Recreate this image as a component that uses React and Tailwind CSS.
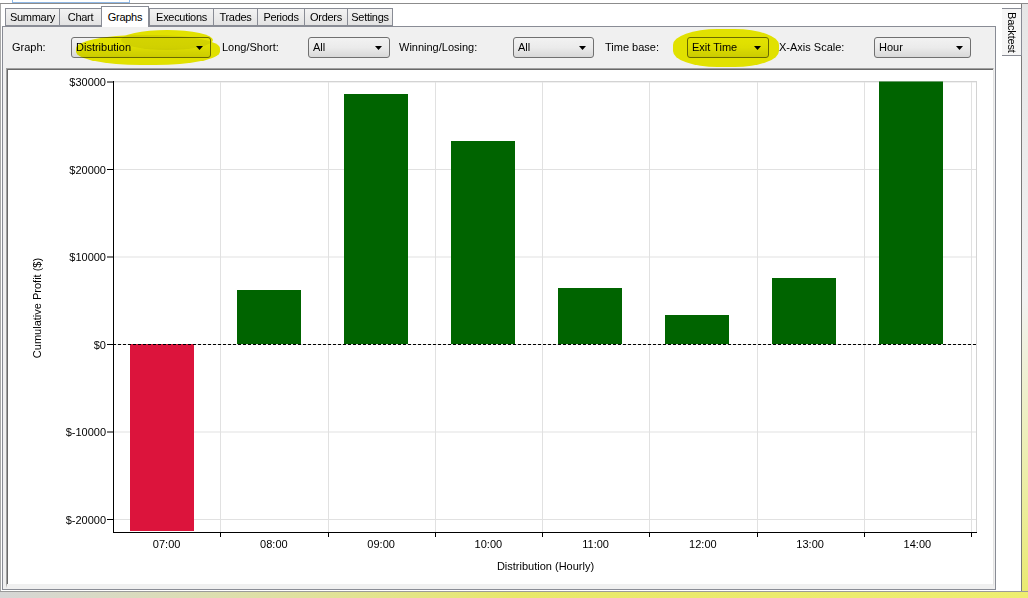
import React from 'react';

const tabs = [
    { label: 'Summary', w: 'w-[54px]' },
    { label: 'Chart', w: 'w-[42px]' },
    { label: 'Graphs', w: 'w-[48px]', active: true },
    { label: 'Executions', w: 'w-[64px]' },
    { label: 'Trades', w: 'w-[44px]' },
    { label: 'Periods', w: 'w-[47px]' },
    { label: 'Orders', w: 'w-[43px]' },
    { label: 'Settings', w: 'w-[46px]' },
];

const filters = [
    { label: 'Graph:', labelW: 'w-[59px]', value: 'Distribution', selW: 'w-[140px]', gap: 'mr-[11px]' },
    { label: 'Long/Short:', labelW: 'w-[86px]', value: 'All', selW: 'w-[82px]', gap: 'mr-[9px]' },
    { label: 'Winning/Losing:', labelW: 'w-[114px]', value: 'All', selW: 'w-[81px]', gap: 'mr-[11px]' },
    { label: 'Time base:', labelW: 'w-[82px]', value: 'Exit Time', selW: 'w-[82px]', gap: 'mr-[10px]' },
    { label: 'X-Axis Scale:', labelW: 'w-[95px]', value: 'Hour', selW: 'w-[97px]', gap: '' },
];

const hours = ['07:00', '08:00', '09:00', '10:00', '11:00', '12:00', '13:00', '14:00'];
const profits = [-21486, 6171, 28571, 23200, 6400, 3314, 7543, 34000];
const yTicks = [30000, 20000, 10000, 0, -10000, -20000];

// plot geometry, in chart-local pixels
const PL = 105;
const PR = 968;
const PT = 11.5;
const PB = 462;
const STEP = 107.25;
const yOf = (v) => 274 - v * 0.00875;

function Select({ value, width }) {
    return (
        <div className={`${width} h-[21px] flex items-center justify-between rounded-[3px] border border-[#707070] bg-gradient-to-b from-[#f2f2f2] via-[#ebebeb] to-[#d8d8d8] pl-[4px] pr-[7px]`}>
            <span className="text-[11px] text-black leading-none">{value}</span>
            <svg width="7" height="4" viewBox="0 0 7 4">
                <path d="M0 0h7L3.5 4z" fill="#000" />
            </svg>
        </div>
    );
}

function ProfitChart() {
    return (
        <svg width="983" height="512" viewBox="0 0 983 512" className="block" style={{ fontFamily: '"Liberation Sans", Arial, sans-serif' }}>
            {/* grid */}
            {yTicks.map((v) => (
                <line key={v} x1={PL} x2={PR} y1={yOf(v) + 0.5} y2={yOf(v) + 0.5} stroke="#e1e1e1" />
            ))}
            {hours.map((h, i) => (
                <line key={h} x1={Math.round(PL + (i + 1) * STEP) + 0.5} x2={Math.round(PL + (i + 1) * STEP) + 0.5} y1={PT} y2={PB} stroke="#e1e1e1" />
            ))}
            <line x1={PL} x2={PR} y1={11.5} y2={11.5} stroke="#d3d3d3" />
            <line x1={PR + 0.5} x2={PR + 0.5} y1={11} y2={PB} stroke="#d3d3d3" />

            {/* bars */}
            {profits.map((v, i) => {
                const x = 122 + i * 107;
                const y0 = yOf(0);
                const y1 = Math.max(PT, Math.min(461, yOf(v)));
                return (
                    <rect
                        key={i}
                        x={x}
                        y={Math.min(y0, y1)}
                        width="64"
                        height={Math.abs(y1 - y0)}
                        fill={v < 0 ? '#dc143c' : '#006400'}
                    />
                );
            })}

            {/* zero line */}
            <line x1={PL} x2={PR} y1={274.5} y2={274.5} stroke="#000" strokeDasharray="3 2" />

            {/* axes */}
            <line x1={PL + 0.5} x2={PL + 0.5} y1={11} y2={PB + 1} stroke="#000" />
            <line x1={PL} x2={969} y1={PB + 0.5} y2={PB + 0.5} stroke="#000" />

            {yTicks.map((v) => (
                <g key={v}>
                    <line x1={99} x2={PL} y1={yOf(v) + 0.5} y2={yOf(v) + 0.5} stroke="#000" />
                    <text x={98} y={yOf(v) + 4.5} textAnchor="end" fontSize="11" fill="#000">
                        {v < 0 ? `$-${Math.abs(v)}` : `$${v}`}
                    </text>
                </g>
            ))}

            {hours.map((h, i) => (
                <g key={h}>
                    <line x1={Math.round(PL + (i + 1) * STEP) + 0.5} x2={Math.round(PL + (i + 1) * STEP) + 0.5} y1={PB} y2={PB + 5} stroke="#000" />
                    <text x={PL + (i + 0.5) * STEP} y={478} textAnchor="middle" fontSize="11" fill="#000">
                        {h}
                    </text>
                </g>
            ))}

            <text x={537.5} y={499.5} textAnchor="middle" fontSize="11" fill="#000">
                Distribution (Hourly)
            </text>
            <text x={29} y={238} textAnchor="middle" dominantBaseline="central" fontSize="11" fill="#000" transform="rotate(-90 29 238)">
                Cumulative Profit ($)
            </text>
        </svg>
    );
}

export default function App() {
    return (
        <div className="relative w-[1028px] h-[598px] overflow-hidden bg-white flex flex-col font-['Liberation_Sans',Arial,sans-serif] text-black">
            {/* top strip */}
            <div className="h-[4px] border-b border-[#8c8c8c] shrink-0">
                <div className="ml-[12px] w-[118px] h-[3px] border-x border-b border-[#8fb8e6] bg-white" />
            </div>

            <div className="flex flex-1 min-h-0">
                {/* main tab control */}
                <div className="w-[997px] flex flex-col border-l border-[#a9a9a9] pl-[1px]">
                    <div className="h-[22px] flex items-end pl-[3px] shrink-0">
                        {tabs.map((t) =>
                            t.active ? (
                                <div key={t.label} className={`${t.w} h-[21px] -mb-px relative z-10 flex items-center justify-center bg-white border border-b-0 border-[#898c95] text-[11px] tracking-[-0.3px]`}>
                                    {t.label}
                                </div>
                            ) : (
                                <div key={t.label} className={`${t.w} h-[18px] flex items-center justify-center bg-gradient-to-b from-[#f3f3f3] to-[#e3e3e3] border border-r-0 border-[#898c95] last:border-r text-[11px] tracking-[-0.3px]`}>
                                    {t.label}
                                </div>
                            )
                        )}
                    </div>

                    <div className="flex-1 flex flex-col border border-[#898c95] bg-[#f0f0f0] mr-[1px] mb-[1px]">
                        {/* filter bar */}
                        <div className="h-[41px] shrink-0 flex items-center pl-[9px] relative">
                            {filters.map((f) => (
                                <div key={f.label} className={`flex items-center ${f.gap}`}>
                                    <span className={`${f.labelW} text-[11px]`}>{f.label}</span>
                                    <Select value={f.value} width={f.selW} />
                                </div>
                            ))}
                            {/* highlighter marks */}
                            <div className="absolute left-[73px] top-[8px] w-[144px] h-[30px] rounded-[45%] bg-[#f0f000] mix-blend-multiply blur-[0.5px] pointer-events-none" />
                            <div className="absolute left-[118px] top-[3px] w-[92px] h-[20px] rounded-[50%] bg-[#f0f000] mix-blend-multiply blur-[0.5px] pointer-events-none" />
                            <div className="absolute left-[670px] top-[2px] w-[106px] h-[38px] rounded-[42%] bg-[#f0f000] mix-blend-multiply blur-[0.5px] pointer-events-none" />
                        </div>

                        {/* chart control */}
                        <div className="flex-1 ml-[3px] mr-[1px] mb-[1px] border-t border-l border-[#a0a0a0] border-r border-r-[#e3e3e3] border-b-4 border-b-[#f0f0f0]">
                            <div className="h-full border-t border-l border-[#696969] bg-white overflow-hidden">
                                <ProfitChart />
                            </div>
                        </div>
                    </div>
                </div>

                {/* side tab */}
                <div className="w-[25px] border-r border-[#7a7a7a] pl-[5px] pt-[4px]">
                    <div className="w-[20px] h-[48px] border border-l-0 border-[#898c95] bg-[#f6f6f6] flex items-center justify-center">
                        <span className="text-[11px] [writing-mode:vertical-rl] tracking-[-0.2px]">Backtest</span>
                    </div>
                </div>

                {/* window edge */}
                <div className="flex-1 bg-gradient-to-b from-[#e6e6e6] via-[#f2f2f2] to-[#eaea70]" />
            </div>

            {/* bottom strip */}
            <div className="h-[7px] shrink-0 border-t border-[#9a9a9a] bg-gradient-to-r from-[#d6d6d6] via-[#e8e86a] to-[#eeee70]" />
        </div>
    );
}
